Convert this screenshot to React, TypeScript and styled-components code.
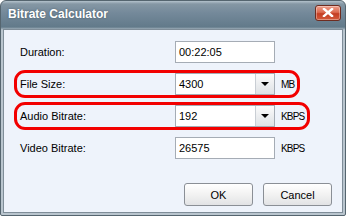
import React from 'react';
import styled, { createGlobalStyle } from 'styled-components';

const GlobalStyle = createGlobalStyle`
    html, body {
        margin: 0;
        padding: 0;
        background: #ffffff;
    }
    body {
        font-family: "Liberation Sans", Arial, sans-serif;
        font-size: 11px;
        color: #000;
    }
`;

const Window = styled.div`
    box-sizing: border-box;
    width: 346px;
    height: 216px;
    display: flex;
    flex-direction: column;
    border: 1px solid #55656f;
    border-radius: 6px 6px 2px 2px;
    background: linear-gradient(to bottom, #b4c2cc 0px, #8597a4 3px, #74899a 12px, #627a8a 26px, #b9c5ce 29px, #b9c5ce 100%);
    overflow: hidden;
`;

const TitleBar = styled.div`
    height: 28px;
    flex: none;
    display: flex;
    align-items: center;
    justify-content: space-between;
    padding: 0 4px 0 7px;
`;

const Title = styled.div`
    font-weight: bold;
    font-size: 12px;
    color: #fff;
    text-shadow: 0 0 2px rgba(40, 55, 65, 0.6);
    margin-top: -2px;
`;

const CloseButton = styled.div`
    box-sizing: border-box;
    width: 26px;
    height: 16px;
    margin-top: -5px;
    border: 1px solid #6e2c20;
    border-radius: 3px;
    background: linear-gradient(to bottom, #eea08c 0%, #dc6a50 45%, #c43d22 55%, #d35a3c 100%);
    display: flex;
    align-items: center;
    justify-content: center;
    box-shadow: inset 0 0 0 1px rgba(255, 255, 255, 0.35);
`;

const Body = styled.div`
    flex: 1;
    margin: 0 2px 2px;
    border: 1px solid #7f8d98;
    background: #eef3fb;
    display: flex;
    flex-direction: column;
    padding: 11px 10px 6px 16px;
`;

const Rows = styled.div`
    display: flex;
    flex-direction: column;
    gap: 10px;
`;

const Row = styled.div<{ $ring?: number }>`
    position: relative;
    display: grid;
    grid-template-columns: 149px 100px auto;
    column-gap: 6px;
    align-items: center;
    height: 22px;

    &::before {
        content: '';
        display: ${p => (p.$ring ? 'block' : 'none')};
        position: absolute;
        left: -6px;
        top: -3px;
        width: ${p => p.$ring || 0}px;
        height: 28px;
        box-sizing: border-box;
        border: 3px solid #f20000;
        border-radius: 11px;
        pointer-events: none;
    }
`;

const Label = styled.div``;

const TextBox = styled.div`
    box-sizing: border-box;
    height: 22px;
    border: 1px solid #a5acb5;
    background: #fff;
    display: flex;
    align-items: center;
    padding-left: 3px;
`;

const Combo = styled.div`
    box-sizing: border-box;
    height: 22px;
    border: 1px solid #a5acb5;
    background: #fff;
    display: flex;
    align-items: stretch;
`;

const ComboText = styled.div`
    flex: 1;
    display: flex;
    align-items: center;
    padding-left: 3px;
`;

const ComboArrow = styled.div`
    width: 18px;
    border-left: 1px solid #c9ced4;
    background: linear-gradient(to bottom, #fbfbfb 0%, #eceef0 50%, #dfe2e5 100%);
    display: flex;
    align-items: center;
    justify-content: center;

    &::after {
        content: '';
        width: 0;
        height: 0;
        border-left: 4px solid transparent;
        border-right: 4px solid transparent;
        border-top: 4px solid #000;
    }
`;

// Tahoma-like narrow capitals
const Unit = styled.div`
    font-size: 10px;
    letter-spacing: -0.8px;
`;

const Buttons = styled.div`
    margin-top: auto;
    display: flex;
    justify-content: flex-end;
    gap: 10px;
`;

const Button = styled.div`
    box-sizing: border-box;
    width: 69px;
    height: 23px;
    border: 1px solid #8a8f96;
    border-radius: 3px;
    background: linear-gradient(to bottom, #ffffff 0%, #f2f2f2 50%, #e2e3e5 100%);
    display: flex;
    align-items: center;
    justify-content: center;
`;

const CloseIcon = () => (
    <svg width="12" height="9" viewBox="0 0 12 9">
        <path d="M2 1 L10 8 M10 1 L2 8" stroke="#fff" strokeWidth="2.4" strokeLinecap="square" />
    </svg>
);

const BitrateCalculator = () => (
    <Window>
        <TitleBar>
            <Title>Bitrate Calculator</Title>
            <CloseButton><CloseIcon /></CloseButton>
        </TitleBar>
        <Body>
            <Rows>
                <Row>
                    <Label>Duration:</Label>
                    <TextBox>00:22:05</TextBox>
                </Row>
                <Row $ring={286}>
                    <Label>File Size:</Label>
                    <Combo>
                        <ComboText>4300</ComboText>
                        <ComboArrow />
                    </Combo>
                    <Unit>MB</Unit>
                </Row>
                <Row $ring={296}>
                    <Label>Audio Bitrate:</Label>
                    <Combo>
                        <ComboText>192</ComboText>
                        <ComboArrow />
                    </Combo>
                    <Unit>KBPS</Unit>
                </Row>
                <Row>
                    <Label>Video Bitrate:</Label>
                    <TextBox>26575</TextBox>
                    <Unit>KBPS</Unit>
                </Row>
            </Rows>
            <Buttons>
                <Button>OK</Button>
                <Button>Cancel</Button>
            </Buttons>
        </Body>
    </Window>
);

export default function App() {
    return (
        <>
            <GlobalStyle />
            <BitrateCalculator />
        </>
    );
}
